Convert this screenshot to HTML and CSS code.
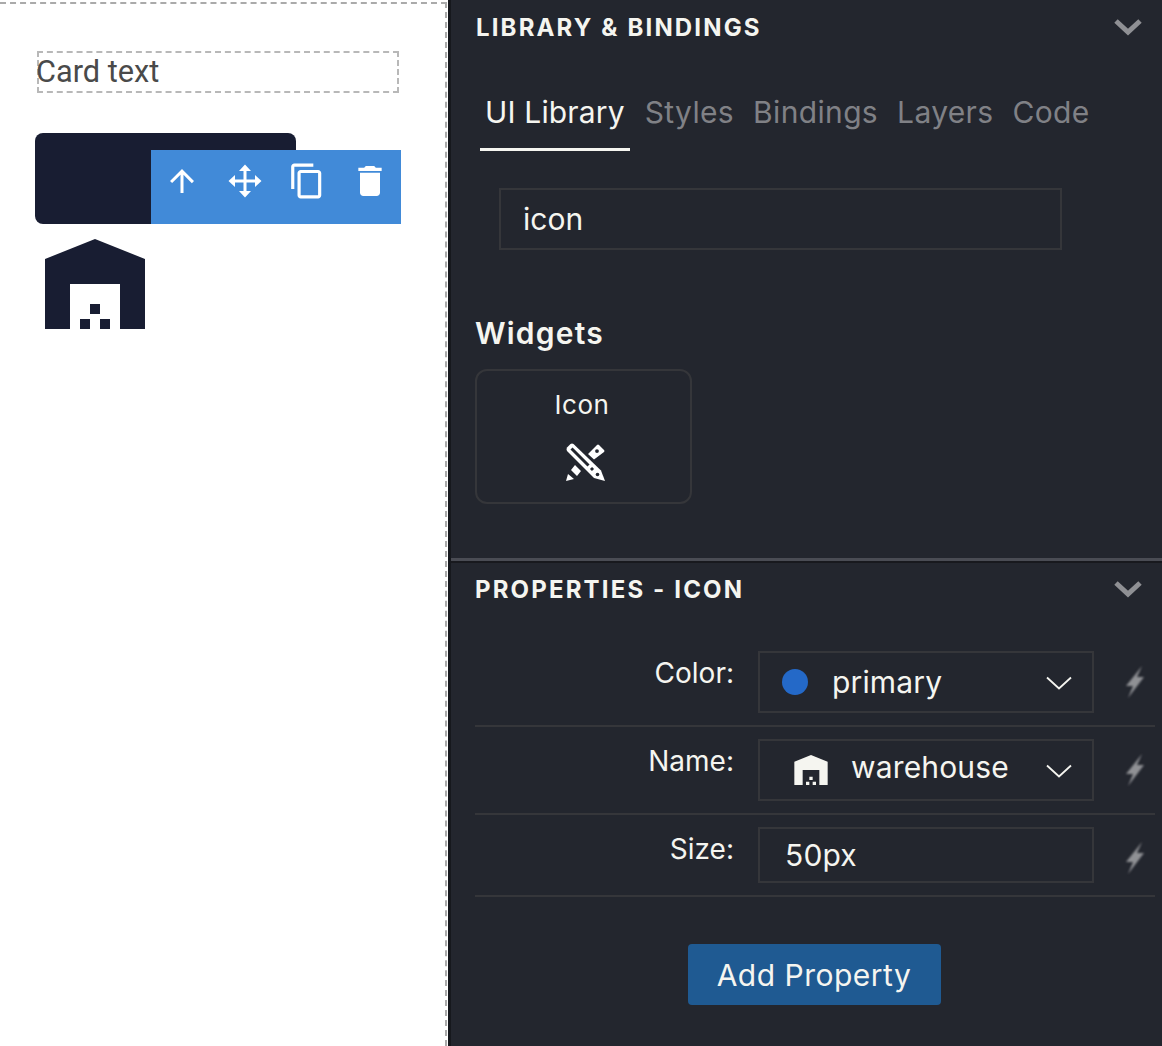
FILE: index.html
```html
<!doctype html>
<html lang="en">
 <head>
  <meta charset="UTF-8">
  <title>Library &amp; Bindings</title>
  <link rel="stylesheet" href="styles.css">
 </head>
 <body>
  <div class="app">
   <!--canvas-->
   <div class="stage">
    <div class="card_text">Card text</div>
    <div class="card">
     <div class="toolbar">
      <svg class="ic_arrow" viewBox="0 0 24 24"><path d="M4 12l1.41 1.41L11 7.83V20h2V7.83l5.58 5.59L20 12l-8-8-8 8z"/></svg>
      <svg class="ic_arrow" viewBox="0 0 36 36"><path d="M18 1.5l6 6.5h-4.5v8.5H28V12l6.5 6-6.5 6v-4.5h-8.5V28H24l-6 6.5-6-6.5h4.5v-8.5H8V24l-6.5-6L8 12v4.5h8.5V8H12z"/></svg>
      <svg class="ic_copy" viewBox="0 0 24 24"><path d="M16 1H4c-1.1 0-2 .9-2 2v14h2V3h12V1zm3 4H8c-1.1 0-2 .9-2 2v14c0 1.1.9 2 2 2h11c1.1 0 2-.9 2-2V7c0-1.1-.9-2-2-2zm0 16H8V7h11v14z"/></svg>
      <svg class="ic_trash" viewBox="0 0 24 24"><path d="M6 19c0 1.1.9 2 2 2h8c1.1 0 2-.9 2-2V7H6v12zM19 4h-3.5l-1-1h-5l-1 1H5v2h14V4z"/></svg>
     </div>
    </div>
    <svg class="ware_big" viewBox="0 0 24 24"><path d="M22 21V7L12 3 2 7v14h5v-9h10v9h5zm-11-2H9v2h2v-2zm2-3h-2v2h2v-2zm2 3h-2v2h2v-2z"/></svg>
   </div>

   <!--right panel-->
   <div class="panel">
    <div class="lib">
     <div class="head">
      <span>LIBRARY &amp; BINDINGS</span>
      <svg class="head_arrow" viewBox="0 0 28 18"><polyline points="2,3 14,14 26,3"/></svg>
     </div>
     <div class="tabs">
      <div class="tab on">UI Library</div>
      <div class="tab">Styles</div>
      <div class="tab">Bindings</div>
      <div class="tab">Layers</div>
      <div class="tab">Code</div>
     </div>
     <div class="search">icon</div>
     <h3 class="lib_title">Widgets</h3>
     <div class="widget">
      <div class="widget_name">Icon</div>
      <svg class="widget_ic" viewBox="0 0 40 38">
       <path d="M1 4.5L4.5 1Q6 0 7.5 1L35 27.5L39 38L28 35L1 8Q0 6 1 4.5Z"/>
       <path class="cut" d="M5.5 5.5L22.5 22.5M25 25L27 27"/>
       <circle class="cut_dot" cx="31.5" cy="31.5" r="1.8"/>
       <path fill-rule="evenodd" d="M22 11L31 2Q32 1 33 2L38 7Q39 8 38 9L28 16.5ZM31 6.2A1.9 1.9 0 1 0 31 10A1.9 1.9 0 1 0 31 6.2Z"/>
       <path d="M5 27L9 22L15 28L11 33ZM0 38L2 31L8 36Z"/>
      </svg>
     </div>
    </div>

    <div class="props">
     <div class="head head2">
      <span>PROPERTIES - ICON</span>
      <svg class="head_arrow" viewBox="0 0 28 18"><polyline points="2,3 14,14 26,3"/></svg>
     </div>
     <div class="row">
      <label>Color:</label>
      <div class="field">
       <i class="dot"></i>
       <span class="val">primary</span>
       <svg class="sel_arrow" viewBox="0 0 26 14"><polyline points="1,1.5 13,12.5 25,1.5"/></svg>
      </div>
      <svg class="bolt" viewBox="0 0 18 32"><path d="M16 0L0 20H7L2 32L18 11H11Z"/></svg>
     </div>
     <div class="row">
      <label>Name:</label>
      <div class="field">
       <svg class="ware_small" viewBox="0 0 24 24"><path d="M22 21V7L12 3 2 7v14h5v-9h10v9h5zm-11-2H9v2h2v-2zm2-3h-2v2h2v-2zm2 3h-2v2h2v-2z"/></svg>
       <span class="val val_up">warehouse</span>
       <svg class="sel_arrow" viewBox="0 0 26 14"><polyline points="1,1.5 13,12.5 25,1.5"/></svg>
      </div>
      <svg class="bolt" viewBox="0 0 18 32"><path d="M16 0L0 20H7L2 32L18 11H11Z"/></svg>
     </div>
     <div class="row">
      <label>Size:</label>
      <div class="field field_s"><span class="val">50px</span></div>
      <svg class="bolt" viewBox="0 0 18 32"><path d="M16 0L0 20H7L2 32L18 11H11Z"/></svg>
     </div>
     <div class="add_wrap"><button class="add">Add Property</button></div>
    </div>
   </div>
  </div>
 </body>
</html>
```

FILE: styles.css
```css
*{padding:0;margin:0;box-sizing:border-box;}
html,body{height:100%;overflow:hidden;background:#fff;}
body{font-family:"Inter","Noto Sans",sans-serif;}
.app{display:flex;height:1046px;width:1162px;}

/*canvas*/
.stage{width:447px;height:1044px;margin-top:2px;margin-right:1px;border-top:2px dashed #aaa;border-right:2px dashed #aaa;padding:47px 0 0 35px;flex:none;}
.card_text{width:362px;height:42px;margin-left:2px;border:2px dashed #b8b8b8;font:30.7px/37px "Roboto",sans-serif;color:#4a4a4a;text-indent:-3px;white-space:nowrap;}
.card{position:relative;width:261px;height:91px;margin-top:40px;background:#181d32;border-radius:8px;}
.toolbar{position:absolute;left:116px;bottom:0;width:250px;height:74px;background:#418ad8;display:grid;grid-template-columns:repeat(4,1fr);align-items:center;justify-items:center;padding-bottom:12px;}
.toolbar svg{fill:#fff;display:block;}
.ic_arrow{width:36px;height:36px;}
.ic_copy{width:38px;height:38px;}
.ic_trash{width:40px;height:40px;}
.ware_big{display:block;width:120px;height:120px;fill:#181d32;}

/*panel*/
.panel{flex:1;background:#23262e;border-left:3px solid #16181d;color:#f5f5f0;}
.lib{height:558px;padding-left:25px;}
.head{height:54px;display:flex;align-items:center;justify-content:space-between;padding-right:20px;font-size:24px;font-weight:700;letter-spacing:2.15px;}
.head_arrow{width:28px;height:18px;fill:none;stroke:#8f9094;stroke-width:5;}
.tabs{display:flex;gap:9px;margin-top:22px;margin-left:4px;}
.tab{height:75px;padding:0 5px;font-size:30px;letter-spacing:.35px;line-height:73px;color:#808186;white-space:nowrap;}
.tab.on{color:#f5f5f0;border-bottom:3px solid #f5f5f0;height:75px;letter-spacing:.15px;margin-right:1px;}
.search{width:563px;height:62px;margin:37px 0 0 23px;padding-left:22px;border:2px solid #35363a;font-size:30px;line-height:58px;}
.lib_title{margin-top:64px;margin-left:-1px;font-size:30px;font-weight:600;letter-spacing:1.2px;line-height:38px;}
.widget{width:217px;height:135px;margin-top:17px;margin-left:-1px;border:2px solid #35363a;border-radius:12px;text-align:center;}
.widget_name{font-size:26px;letter-spacing:.5px;line-height:34px;margin-top:17px;margin-left:-3px;}
.widget_ic{display:block;width:40px;height:38px;margin:21px 0 0 89px;fill:#fff;}
.widget_ic .cut{fill:none;stroke:#23262e;stroke-width:3;}
.widget_ic .cut_dot{fill:#23262e;}

.props{border-top:3px solid #4a4c54;padding:0 7px 0 24px;box-shadow:inset 0 2px 0 #18191e;}
.head2{height:56px;padding-right:13px;}
.row{display:flex;align-items:flex-start;width:680px;padding:12px 0;border-bottom:2px solid #35363a;}
.head2 + .row{margin-top:22px;}
.row label{width:259px;padding-top:5px;text-align:right;font-size:28px;line-height:34px;}
.field{display:flex;align-items:center;width:336px;height:62px;margin-left:24px;border:2px solid #35363a;padding-left:22px;font-size:30px;letter-spacing:.15px;position:relative;}
.field_s{height:56px;padding-left:25px;}
.dot{display:block;width:26px;height:26px;border-radius:50%;background:#2469c8;margin-right:24px;flex:none;}
.val{white-space:nowrap;}
.val_up{position:relative;top:-3px;}
.ware_small{width:40px;height:40px;margin:0 20px 0 9px;fill:#f5f5f0;flex:none;}
.sel_arrow{position:absolute;right:20px;top:23px;width:26px;height:14px;fill:none;stroke:#f5f5f0;stroke-width:1.8;}
.bolt{width:18px;height:32px;margin:15px 0 0 32px;fill:#909195;filter:blur(1px);flex:none;}
.add_wrap{width:678px;text-align:center;padding-top:47px;}
.add{width:253px;height:61px;background:#1f5a92;border:0;border-radius:4px;color:#f5f5f0;font:30px "Inter","Noto Sans",sans-serif;letter-spacing:.5px;}
```
